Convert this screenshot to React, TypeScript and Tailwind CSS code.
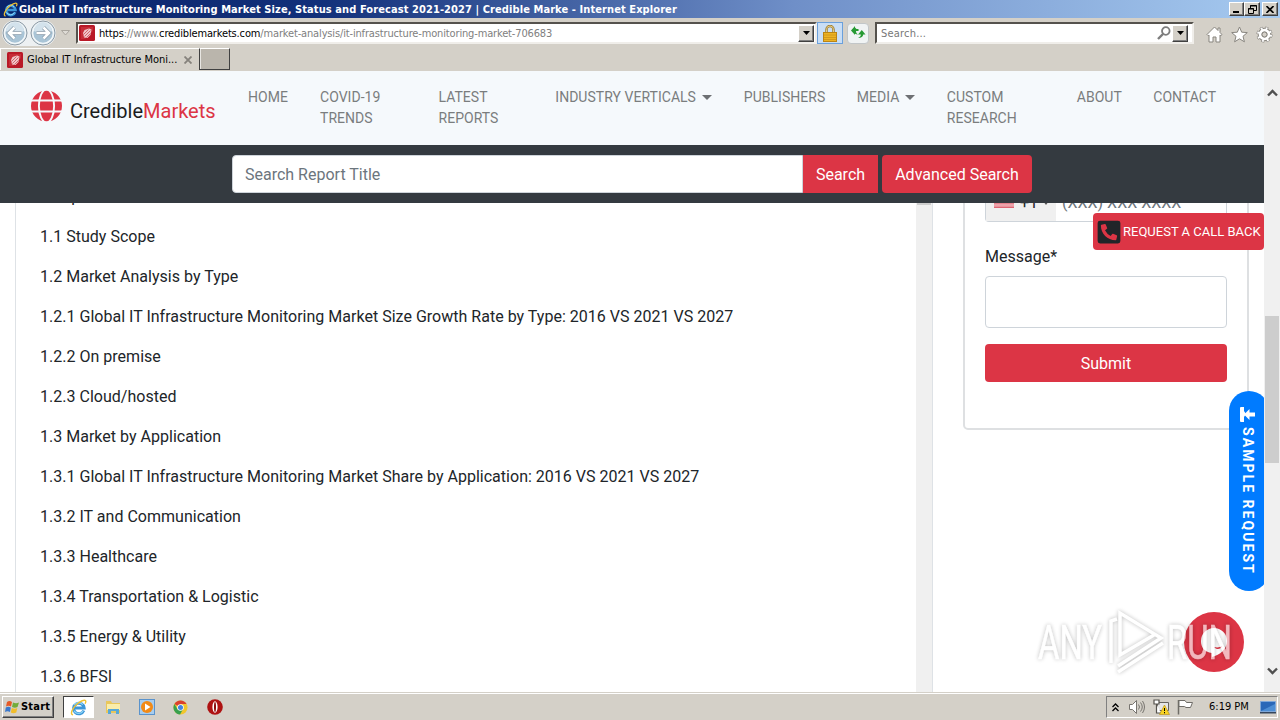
import { FaPhoneSquareAlt } from "react-icons/fa";

const navItems = [
  { label: "HOME", width: "w-[72px]" },
  { label: "COVID-19 TRENDS", width: "w-[118.5px]", inner: "w-[70px]" },
  { label: "LATEST REPORTS", width: "w-[116.8px]", inner: "w-[70px]" },
  { label: "INDUSTRY VERTICALS", width: "w-[188.5px]", caret: true },
  { label: "PUBLISHERS", width: "w-[113px]" },
  { label: "MEDIA", width: "w-[90px]", caret: true },
  { label: "CUSTOM RESEARCH", width: "w-[130px]", inner: "w-[80px]" },
  { label: "ABOUT", width: "w-[76.5px]" },
  { label: "CONTACT", width: "w-[80px]" },
];

const contents = [
  "1 Report Overview",
  "1.1 Study Scope",
  "1.2 Market Analysis by Type",
  "1.2.1 Global IT Infrastructure Monitoring Market Size Growth Rate by Type: 2016 VS 2021 VS 2027",
  "1.2.2 On premise",
  "1.2.3 Cloud/hosted",
  "1.3 Market by Application",
  "1.3.1 Global IT Infrastructure Monitoring Market Share by Application: 2016 VS 2021 VS 2027",
  "1.3.2 IT and Communication",
  "1.3.3 Healthcare",
  "1.3.4 Transportation & Logistic",
  "1.3.5 Energy & Utility",
  "1.3.6 BFSI",
];

const raised =
  "border border-t-white border-l-white border-r-[#404040] border-b-[#404040] bg-[#d4d0c8] shadow-[inset_-1px_-1px_0_#808080]";

const IeIcon = ({ size }: { size: number }) => (
  <svg width={size} height={size} viewBox="0 0 18 18" fill="none">
    <path d="M14.600 12.200A5.600 5.600 0 1 1 15 9.600H5" stroke="#3c96d8" strokeWidth="3.200" />
    <path d="M14 12.500A5.600 5.600 0 0 1 4.200 12.500M4.500 6.300a5.600 5.600 0 0 1 9-.3" stroke="#8fd6f7" strokeWidth="1.200" />
    <path d="M3.200 16.800C-.5 16.500 2.500 9 8.500 4.500S18.500.2 16 5" stroke="#f0c232" strokeWidth="1.500" />
  </svg>
);

const SiteIcon = () => (
  <svg className="shrink-0" width="16" height="16" viewBox="0 0 16 16">
    <rect width="16" height="16" rx="1.500" fill="#b91927" />
    <path d="M2 2h12v4L6 14H2z" fill="#cf3a45" opacity=".6" />
    <path d="M4 8l1.500-3L10 3.500l2.500 1L11.500 10l-3 3-3.500-.5z" fill="#f0c6c8" />
    <path d="M4.500 9.500l5-5M5.500 11.500l6-6M7.500 12.500l4-4" stroke="#c43b47" strokeWidth=".7" />
  </svg>
);

const DropButton = () => (
  <div className={`flex h-[17px] w-[16px] shrink-0 items-center justify-center ${raised}`}>
    <svg width="7" height="4" viewBox="0 0 7 4">
      <path d="M0 0h7L3.500 4z" />
    </svg>
  </div>
);

const NavButton = ({ flip }: { flip?: boolean }) => (
  <svg className={flip ? "-scale-x-100" : ""} width="26" height="26" viewBox="0 0 26 26">
    <circle cx="13" cy="13" r="12" fill="#dfe8ee" stroke="#8c9aa5" />
    <circle cx="13" cy="13" r="10.300" fill="#a9c4d6" stroke="#f4f8fa" strokeWidth="1.200" />
    <path d="M4 11a9 9 0 0 1 18 0c-5 2-13 2-18 0z" fill="#d3e2ec" />
    <path d="M19.500 13H8M12.500 7.500L7 13l5.500 5.500" fill="none" stroke="#8799a8" strokeWidth="4" />
    <path d="M19.500 13H8M12.500 7.500L7 13l5.500 5.500" fill="none" stroke="#fff" strokeWidth="2.600" />
  </svg>
);

function TitleBar() {
  return (
    <div className="flex h-[18px] items-center bg-[linear-gradient(90deg,#0a246a_0%,#12307a_25%,#6f8fc8_62%,#a6caf0_100%)] pr-[2px] pl-[3px]">
      <IeIcon size={15} />
      <span className="ml-px flex-1 pt-px text-[11px] leading-[18px] font-bold tracking-[0.086px] whitespace-nowrap text-white [font-stretch:75%]">
        Global IT Infrastructure Monitoring Market Size, Status and Forecast 2021-2027 | Credible Marke - Internet Explorer
      </span>
      <div className={`flex h-[14px] w-[15px] items-end pb-[2px] pl-[3px] ${raised}`}>
        <div className="h-[2px] w-[6px] bg-black" />
      </div>
      <div className={`flex h-[14px] w-[16px] items-center justify-center ${raised}`}>
        <svg width="9" height="9" viewBox="0 0 9 9" fill="none" stroke="#000">
          <path d="M2.500 3V.5h6v5H6M2 1h7M.5 3.500h5v5h-5zM0 4h6" />
        </svg>
      </div>
      <div className={`ml-[2px] flex h-[14px] w-[16px] items-center justify-center ${raised}`}>
        <svg width="8" height="7" viewBox="0 0 8 7" stroke="#000" strokeWidth="1.600">
          <path d="M.5 0l7 7M7.500 0l-7 7" />
        </svg>
      </div>
    </div>
  );
}

function AddressBar() {
  return (
    <div className="flex h-[30px] items-center bg-[#d4d0c8] pl-[2px]">
      <div className="flex h-[26px] w-[54px] items-center gap-[2px] rounded-full bg-[#edf0f2]">
        <NavButton />
        <NavButton flip />
      </div>
      <svg className="ml-[5px]" width="9" height="6" viewBox="0 0 9 6">
        <path d="M.5.5h8L4.500 5z" fill="#dedbd5" stroke="#aaa69f" />
      </svg>
      <div className="ml-[6px] flex h-[22px] w-[741px] items-center border-2 border-t-[#55524d] border-r-[#f0eeea] border-b-[#f0eeea] border-l-[#55524d] bg-white pr-px pl-[1px]">
        <SiteIcon />
        <span className="ml-[4px] flex-1 pt-[2px] text-[11px] tracking-[-0.15px] whitespace-nowrap text-[#808080] [font-stretch:75%]">
          <span className="text-black">https</span>://www.<span className="text-black">crediblemarkets.com</span>
          /market-analysis/it-infrastructure-monitoring-market-706683
        </span>
        <DropButton />
      </div>
      <div className="flex h-[22px] w-[26px] items-center justify-center border border-[#6aa0dc] bg-[#c9def5]">
        <svg width="14" height="17" viewBox="0 0 14 17">
          <path d="M3.500 8V4.500a3.500 3.500 0 0 1 7 0V8" fill="none" stroke="#9a7a2c" strokeWidth="2.400" />
          <path d="M3.500 8V4.500a3.500 3.500 0 0 1 7 0V8" fill="none" stroke="#e6cc84" strokeWidth="1" />
          <rect x=".5" y="7.500" width="13" height="9" fill="#edb322" stroke="#bb8414" />
          <path d="M1 10h12M1 12.500h12M1 14.500h12" stroke="#cb921a" strokeWidth=".8" />
        </svg>
      </div>
      <div className="ml-[4px] flex h-[21px] w-[22px] items-center justify-center rounded-sm border border-[#c2c6c8] bg-[#f0f3f4]">
        <svg width="15" height="14" viewBox="0 0 15 14" fill="#279a34">
          <path d="M.5 5L4 1.500 7.500 5H5c0 1.500.5 2.500 2 3.500C4.500 8.500 3 7.500 3 5z" />
          <path d="M0 4.500L4 0v3h3.500v2H4v4z" />
          <path d="M14.500 8.500L10.800 4 7 8.500h2.800c0 1.800-.8 2.700-2.800 3.500 3.500 0 5-1.200 5.200-3.500z" />
        </svg>
      </div>
      <div className="ml-[6px] flex h-[22px] w-[319px] items-center border-2 border-t-[#55524d] border-r-[#f0eeea] border-b-[#f0eeea] border-l-[#55524d] bg-white pr-[4px] pl-[4px]">
        <span className="flex-1 pt-[2px] text-[11px] tracking-[0.2px] text-[#777] [font-stretch:75%]">Search...</span>
        <svg className="mr-[1px]" width="14" height="14" viewBox="0 0 14 14" fill="none" stroke="#7d7d7d">
          <circle cx="8.800" cy="5" r="3.800" strokeWidth="1.800" />
          <path d="M6 8l-5 5" strokeWidth="2.400" />
        </svg>
        <DropButton />
      </div>
      <div className="ml-[12px] flex items-center gap-[8px] pt-[3px]">
        <svg width="17" height="17" viewBox="0 0 17 17" fill="#fff" stroke="#88857f">
          <path d="M8.500 1L1 8.500l1.200 1.200.8-.7v7h4v-5h3v5h4V9l.8.7L16 8.500l-2-2V2h-2v2.500z" />
        </svg>
        <svg width="17" height="17" viewBox="0 0 17 17" fill="#fff" stroke="#88857f">
          <path d="M8.500 1l2.200 5.200 5.600.4-4.300 3.700 1.400 5.500-4.900-3-4.900 3L5 10.300.7 6.600l5.600-.4z" />
        </svg>
        <svg width="17" height="17" viewBox="0 0 17 17" fill="none">
          <circle cx="8.500" cy="8.500" r="6.300" stroke="#88857f" strokeWidth="3.500" strokeDasharray="2.700 2.250" />
          <circle cx="8.500" cy="8.500" r="4.700" stroke="#88857f" strokeWidth="4.200" />
          <circle cx="8.500" cy="8.500" r="6.300" stroke="#fff" strokeWidth="2.400" strokeDasharray="1.800 3.150" strokeDashoffset="-.45" />
          <circle cx="8.500" cy="8.500" r="4.400" stroke="#fff" strokeWidth="2.800" />
          <circle cx="8.500" cy="8.500" r="2.500" fill="#d4d0c8" stroke="#88857f" />
        </svg>
      </div>
    </div>
  );
}

function TabRow() {
  return (
    <div className="flex h-[23px] items-start bg-[#d4d0c8]">
      <div className="flex h-[22px] w-[199px] items-center border-t border-l border-white pl-[6px]">
        <SiteIcon />
        <span className="ml-[4px] w-[157px] pt-[2px] text-[11px] tracking-[-0.01px] whitespace-nowrap text-black [font-stretch:75%]">
          Global IT Infrastructure Moni...
        </span>
        <svg className="shrink-0" width="8" height="8" viewBox="0 0 8 8" stroke="#85827c" strokeWidth="1.800">
          <path d="M.5.5l7 7M7.500.5l-7 7" />
        </svg>
      </div>
      <div className="h-[22px] w-[31px] border border-t-white border-r-[#404040] border-b-[#404040] border-l-[#404040] bg-[#bab5ac] shadow-[inset_1px_0_0_#e8e6e2]" />
    </div>
  );
}

const Caret = () => (
  <span className="ml-[6px] inline-block border-x-[5px] border-t-[5px] border-x-transparent border-t-[#6d7073] align-[2px]" />
);

function SiteHeader() {
  return (
    <header className="shrink-0">
      <div className="flex h-[74px] bg-[#f5f9fc] pl-[31px]">
        <div className="flex w-[217px] shrink-0 pt-[19px]">
          <svg width="31" height="32" viewBox="0 0 31 32">
            <circle cx="15.500" cy="16" r="15.500" fill="#dc3545" />
            <g fill="none" stroke="#f5f9fc" strokeWidth="1.900">
              <ellipse cx="15.500" cy="16" rx="7.600" ry="16.500" />
              <path d="M0 10.500h31M0 21.500h31" />
            </g>
          </svg>
          <span className="mt-[6px] ml-[8px] text-[20px] leading-[30px] text-[#1b1c1d]">
            Credible<span className="text-[#dc3545]">Markets</span>
          </span>
        </div>
        <nav className="flex pt-[16px] text-[14px] leading-[21px] tracking-[0.03px] text-[#7a7d7e]">
          {navItems.map((item) => (
            <div key={item.label} className={`shrink-0 ${item.width}`}>
              <div className={item.inner ?? "whitespace-nowrap"}>
                {item.label}
                {item.caret && <Caret />}
              </div>
            </div>
          ))}
        </nav>
      </div>
      <div className="flex h-[58px] items-center bg-[#343a40] pl-[232px] text-[16px]">
        <div className="flex h-[38px] w-[571px] items-center rounded-l border border-[#ced4da] bg-white pt-[2px] pl-[12px] text-[#6c757d]">
          Search Report Title
        </div>
        <button className="h-[38px] w-[75px] bg-[#dc3545] pt-[2px] text-white">Search</button>
        <button className="ml-[4px] h-[38px] w-[150px] rounded bg-[#dc3545] pt-[2px] text-white">Advanced Search</button>
      </div>
    </header>
  );
}

function RequestForm() {
  return (
    <div className="-mt-[20px] ml-[30px] h-[247px] w-[286px] rounded-[5px] border-2 border-[#dee0e2] px-[20px] text-[16px] text-[#212529]">
      <div className="flex h-[37px] rounded-b border border-t-0 border-[#ced4da]">
        <div className="flex w-[70px] items-start bg-[#f0f0f0] pt-[6px] pl-[8px]">
          <svg className="mt-[5px]" width="20" height="12" viewBox="0 0 20 12">
            <rect width="20" height="12" fill="#eda3ab" />
            <path d="M0 7h20M0 11.300h20" stroke="#dd6472" strokeWidth="1.200" />
          </svg>
          <span className="ml-[6px] leading-[24px]">+1</span>
          <span className="mt-[10px] ml-[5px] border-x-[3px] border-t-[4px] border-x-transparent border-t-[#555]" />
        </div>
        <span className="pt-[6px] pl-[6px] leading-[24px] whitespace-nowrap text-[#6c757d]">(XXX) XXX-XXXX</span>
      </div>
      <label className="mt-[23px] block leading-[24px]">Message*</label>
      <div className="mt-[7px] h-[52px] rounded border border-[#ced4da] bg-white" />
      <button className="mt-[16px] h-[38px] w-full rounded bg-[#dc3545] pt-px text-white">Submit</button>
    </div>
  );
}

function PageScrollbar() {
  return (
    <div className="flex w-[16px] shrink-0 flex-col items-center bg-[#f0f0f0] pt-[18px] pb-[17px]">
      <svg width="11" height="8" viewBox="0 0 11 8" fill="none" stroke="#505050" strokeWidth="2.400">
        <path d="M1 6.500L5.500 2 10 6.500" />
      </svg>
      <div className="mt-[219px] h-[147px] w-[14px] bg-[#cdcdcd]" />
      <div className="flex-1" />
      <svg width="11" height="8" viewBox="0 0 11 8" fill="none" stroke="#505050" strokeWidth="2.400">
        <path d="M1 1.500L5.500 6 10 1.500" />
      </svg>
    </div>
  );
}

const Watermark = () => (
  <svg className="absolute top-[604px] left-[1034px]" width="204" height="74" viewBox="0 0 204 74">
    <g className="[filter:drop-shadow(0_0_2px_rgba(0,0,0,.4))]" opacity=".65">
      <g fontFamily="Roboto" fontSize="49" fill="#fff" stroke="#fff" strokeWidth=".6">
        <text x="4" y="55" textLength="64" lengthAdjust="spacingAndGlyphs">
          ANY
        </text>
        <text x="133" y="55" textLength="65" lengthAdjust="spacingAndGlyphs">
          RUN
        </text>
      </g>
      <path d="M77 59V17l6-2M86 42V9l41 25-43 28M84 68l45-29M86 18v33l34-20" fill="none" stroke="#fff" strokeWidth="3.500" />
    </g>
  </svg>
);

function Overlays() {
  return (
    <div className="font-['Roboto',sans-serif]">
      <div className="absolute top-[213px] left-[1093px] flex h-[37px] w-[171px] items-center rounded bg-[#dc3545] pl-[3px] text-[13px] whitespace-nowrap text-white">
        <FaPhoneSquareAlt className="shrink-0 text-[#212529]" size={26} />
        <span className="ml-[1px]">REQUEST A CALL BACK</span>
      </div>
      <div className="absolute top-[391px] left-[1229px] h-[200px] w-[35px] overflow-hidden">
        <div className="flex h-[200px] w-[40px] items-center rounded-[20px] bg-[#007bff] pt-[16px] pr-[3px] text-[14px] font-bold tracking-[2.050px] whitespace-nowrap text-white [writing-mode:vertical-rl]">
          <svg className="shrink-0" width="15" height="15" viewBox="0 0 15 15" fill="#fff">
            <path d="M1 0h3v4l2 3-2 3v5H1q-1 0-1-1V1q0-1 1-1z" />
            <path d="M4 7.500L9.500 2v3.500H15v4H9.500V13z" />
          </svg>
          <span className="mt-[5px]">SAMPLE REQUEST</span>
        </div>
      </div>
      <div className="absolute top-[612px] left-[1184px] flex h-[60px] w-[60px] items-center justify-center rounded-full bg-[#dc3545]">
        <svg width="28" height="31" viewBox="0 0 28 31">
          <path d="M14 1a13 13 0 0 1 13 13c0 8-7 14-15 16v-4C4 25 1 20 1 14A13 13 0 0 1 14 1z" fill="#fff" />
          <path d="M14 20c3 .8 6 .5 8-1-1 3-5 4.500-8 1z" fill="#dc3545" />
        </svg>
      </div>
      <Watermark />
    </div>
  );
}

function Taskbar() {
  return (
    <div className="flex h-[28px] items-center border-t border-[#d4d0c8] bg-[#d4d0c8] pt-px pl-[2px] shadow-[inset_0_1px_0_#fff]">
      <div className={`flex h-[22px] w-[52px] items-center pl-[2px] ${raised}`}>
        <svg className="shrink-0" width="15" height="14" viewBox="0 0 15 14">
          <path d="M2 2q2.500-2 5 0L6 6.500Q3.500 5 1 6.500z" fill="#e65a26" />
          <path d="M8 2.500q3 1.500 6 0L12.500 7Q10 8.500 7 7z" fill="#72ac3a" />
          <path d="M.8 7.500q2.500-1.500 5 0L5 12Q2.500 10.500 0 12z" fill="#3a78cc" />
          <path d="M6.800 8q3 1.500 5.500 0l-1 4.500q-3 1.500-5.500 0z" fill="#f1bd2a" />
        </svg>
        <span className="ml-px pt-px text-[11px] font-bold tracking-[0.2px] [font-stretch:75%]">Start</span>
      </div>
      <div className="ml-[9px] flex h-[22px] w-[31px] items-center justify-center border border-t-[#404040] border-r-white border-b-white border-l-[#404040] bg-white">
        <IeIcon size={17} />
      </div>
      <svg className="ml-[11px]" width="17" height="16" viewBox="0 0 17 16">
        <path d="M1 2h5l1 2h8v10H1z" fill="#e9c75b" />
        <path d="M2 5h13v6H2z" fill="#faedaa" />
        <path d="M3 15v-5h11v5h-3v-3H6v3z" fill="#58a8d6" />
      </svg>
      <svg className="ml-[17px]" width="16" height="16" viewBox="0 0 16 16">
        <rect x=".5" y=".5" width="15" height="15" fill="#a7cdef" stroke="#5a93cc" />
        <circle cx="8" cy="8" r="6" fill="#f28a16" />
        <path d="M6 4.500v7l5.500-3.500z" fill="#fff" />
      </svg>
      <svg className="ml-[18px]" width="15" height="15" viewBox="0 0 16 16">
        <circle cx="8" cy="8" r="7.500" fill="#f1c62c" />
        <path d="M8 8L1.500 4.300A7.500 7.500 0 0 1 14.500 4.300H8z" fill="#d9402f" />
        <path d="M1.500 4.200A7.500 7.500 0 0 0 7.500 15.500L10.500 10 5 10z" fill="#38a04e" />
        <circle cx="8" cy="8" r="3.500" fill="#fff" />
        <circle cx="8" cy="8" r="2.700" fill="#4285e0" />
      </svg>
      <svg className="ml-[19px]" width="16" height="16" viewBox="0 0 16 16">
        <circle cx="8" cy="8" r="7.800" fill="#ae1212" />
        <ellipse cx="8" cy="8" rx="2.600" ry="5.800" fill="#fff" />
        <ellipse cx="8" cy="8" rx="1" ry="5" fill="#8b0c0c" />
      </svg>
      <div className="mr-[2px] ml-auto flex h-[22px] w-[172px] items-center border border-t-[#808080] border-r-white border-b-white border-l-[#808080] pl-[5px]">
        <svg width="7" height="9" viewBox="0 0 7 9" fill="none" stroke="#000" strokeWidth="1.300">
          <path d="M.5 4l3-3 3 3M.5 8l3-3 3 3" />
        </svg>
        <svg className="ml-[10px]" width="16" height="16" viewBox="0 0 16 16" fill="none" stroke="#77746f">
          <path d="M.5 5.500h3l4-4v13l-4-4h-3z" fill="#fff" />
          <path d="M9.500 5.500q2 2.500 0 5M11.500 3.500q3.500 4.500 0 9M13.500 2q4 6 0 12" />
        </svg>
        <svg className="ml-[8px]" width="17" height="16" viewBox="0 0 17 16">
          <path d="M4.500 3.500h11v8h-11z" fill="#e5e5e5" stroke="#66635e" />
          <path d="M1 1v4h5V1zM3.500 5v9H8" fill="#fff" stroke="#55524d" strokeWidth="1.200" />
          <path d="M11.500 6l5 9.500h-10z" fill="#f9d423" stroke="#b68a10" strokeWidth=".6" />
          <path d="M11.500 9v3M11.500 13v1.300" stroke="#000" />
        </svg>
        <svg className="ml-[7px]" width="17" height="16" viewBox="0 0 17 16" fill="#fff" stroke="#6f6c67">
          <path d="M1.500 1v14.500" strokeWidth="1.500" />
          <path d="M2 1.500h6l1.500 2h6l-2 5H9L7.500 7.500H2z" />
        </svg>
        <span className="ml-[15px] pt-px text-[11px] whitespace-nowrap text-black [font-stretch:75%]">6:19 PM</span>
        <svg className="mr-[1px] ml-auto shrink-0" width="16" height="13" viewBox="0 0 16 13">
          <path d="M.5.5h15v10H.5z" fill="#2a68b8" stroke="#7ea7d8" />
          <path d="M1 10l14-7v7z" fill="#4d8ed4" />
          <path d="M0 11h16v1.500H0z" fill="#35465c" />
        </svg>
      </div>
    </div>
  );
}

export default function App() {
  return (
    <div className="relative flex h-[720px] w-[1280px] flex-col overflow-hidden bg-white font-['DejaVu_Sans_Condensed','DejaVu_Sans',sans-serif]">
      <TitleBar />
      <AddressBar />
      <TabRow />
      <main className="flex h-[621px] font-['Roboto',sans-serif]">
        <div className="flex w-[1264px] flex-col overflow-hidden">
          <SiteHeader />
          <div className="flex min-h-0 flex-1 overflow-hidden">
            <div className="ml-[15px] flex w-[918px] border-x border-[#dee2e6]">
              <div className="-mt-[18px] flex flex-1 flex-col gap-[16px] pl-[24px] text-[16px] leading-[24px] tracking-[0.014px] text-[#212529]">
                {contents.map((line) => (
                  <p key={line} className="shrink-0 whitespace-nowrap">
                    {line}
                  </p>
                ))}
              </div>
              <div className="w-[16px] bg-[#f0f0f0]">
                <div className="mx-px h-[2px] bg-[#cdcdcd]" />
              </div>
            </div>
            <RequestForm />
          </div>
        </div>
        <PageScrollbar />
      </main>
      <Overlays />
      <Taskbar />
    </div>
  );
}
